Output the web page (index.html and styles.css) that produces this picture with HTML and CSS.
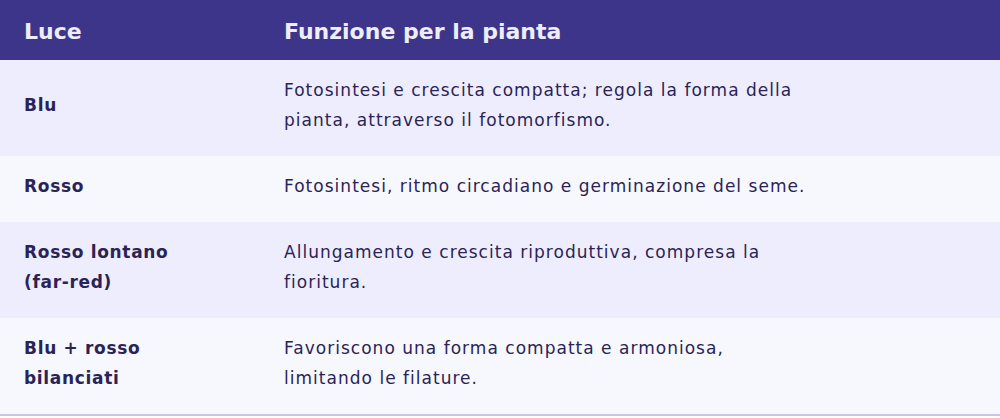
FILE: index.html
```html
<!DOCTYPE html>
<html lang="it">
<head>
<meta charset="utf-8">
<title>Luce</title>
<link rel="stylesheet" href="styles.css">
</head>
<body>
<table class="light-table">
  <thead>
    <tr>
      <th class="col-light">Luce</th>
      <th class="col-func">Funzione per la pianta</th>
    </tr>
  </thead>
  <tbody>
    <tr class="row-odd">
      <td class="cell-light">Blu</td>
      <td class="cell-func"><div class="func-text">Fotosintesi e crescita compatta; regola la forma della pianta, attraverso il fotomorfismo.</div></td>
    </tr>
    <tr class="row-even">
      <td class="cell-light">Rosso</td>
      <td class="cell-func"><div class="func-text">Fotosintesi, ritmo circadiano e germinazione del seme.</div></td>
    </tr>
    <tr class="row-odd">
      <td class="cell-light">Rosso lontano<br>(far-red)</td>
      <td class="cell-func"><div class="func-text">Allungamento e crescita riproduttiva, compresa la fioritura.</div></td>
    </tr>
    <tr class="row-even row-last">
      <td class="cell-light">Blu + rosso<br>bilanciati</td>
      <td class="cell-func"><div class="func-text">Favoriscono una forma compatta e armoniosa, limitando le filature.</div></td>
    </tr>
  </tbody>
</table>
</body>
</html>
```
FILE: styles.css
```css
html, body {
  margin: 0;
  padding: 0;
  background: #ffffff;
}
body {
  font-family: "DejaVu Sans", sans-serif;
  color: #2a2456;
}
.light-table {
  width: 1000px;
  border-collapse: collapse;
  border-spacing: 0;
}
.light-table th {
  background: #3d3589;
  color: #eeedfc;
  font-size: 22px;
  font-weight: bold;
  text-align: left;
  height: 60px;
  padding: 2px 24px 0;
  box-sizing: border-box;
  vertical-align: middle;
}
.col-light {
  width: 260px;
}
.light-table td {
  padding: 15px 24px 21px;
  font-size: 17px;
  line-height: 30px;
  vertical-align: middle;
  text-align: left;
}
.cell-light {
  font-weight: bold;
  letter-spacing: 0.04em;
  width: 212px;
}
.cell-func {
  letter-spacing: 0.06em;
}
.func-text {
  max-width: 530px;
}
.row-odd {
  background: #eeedfd;
}
.row-even {
  background: #f7f7fe;
}
.row-last td {
  border-bottom: 2px solid #cac7e2;
}
```
